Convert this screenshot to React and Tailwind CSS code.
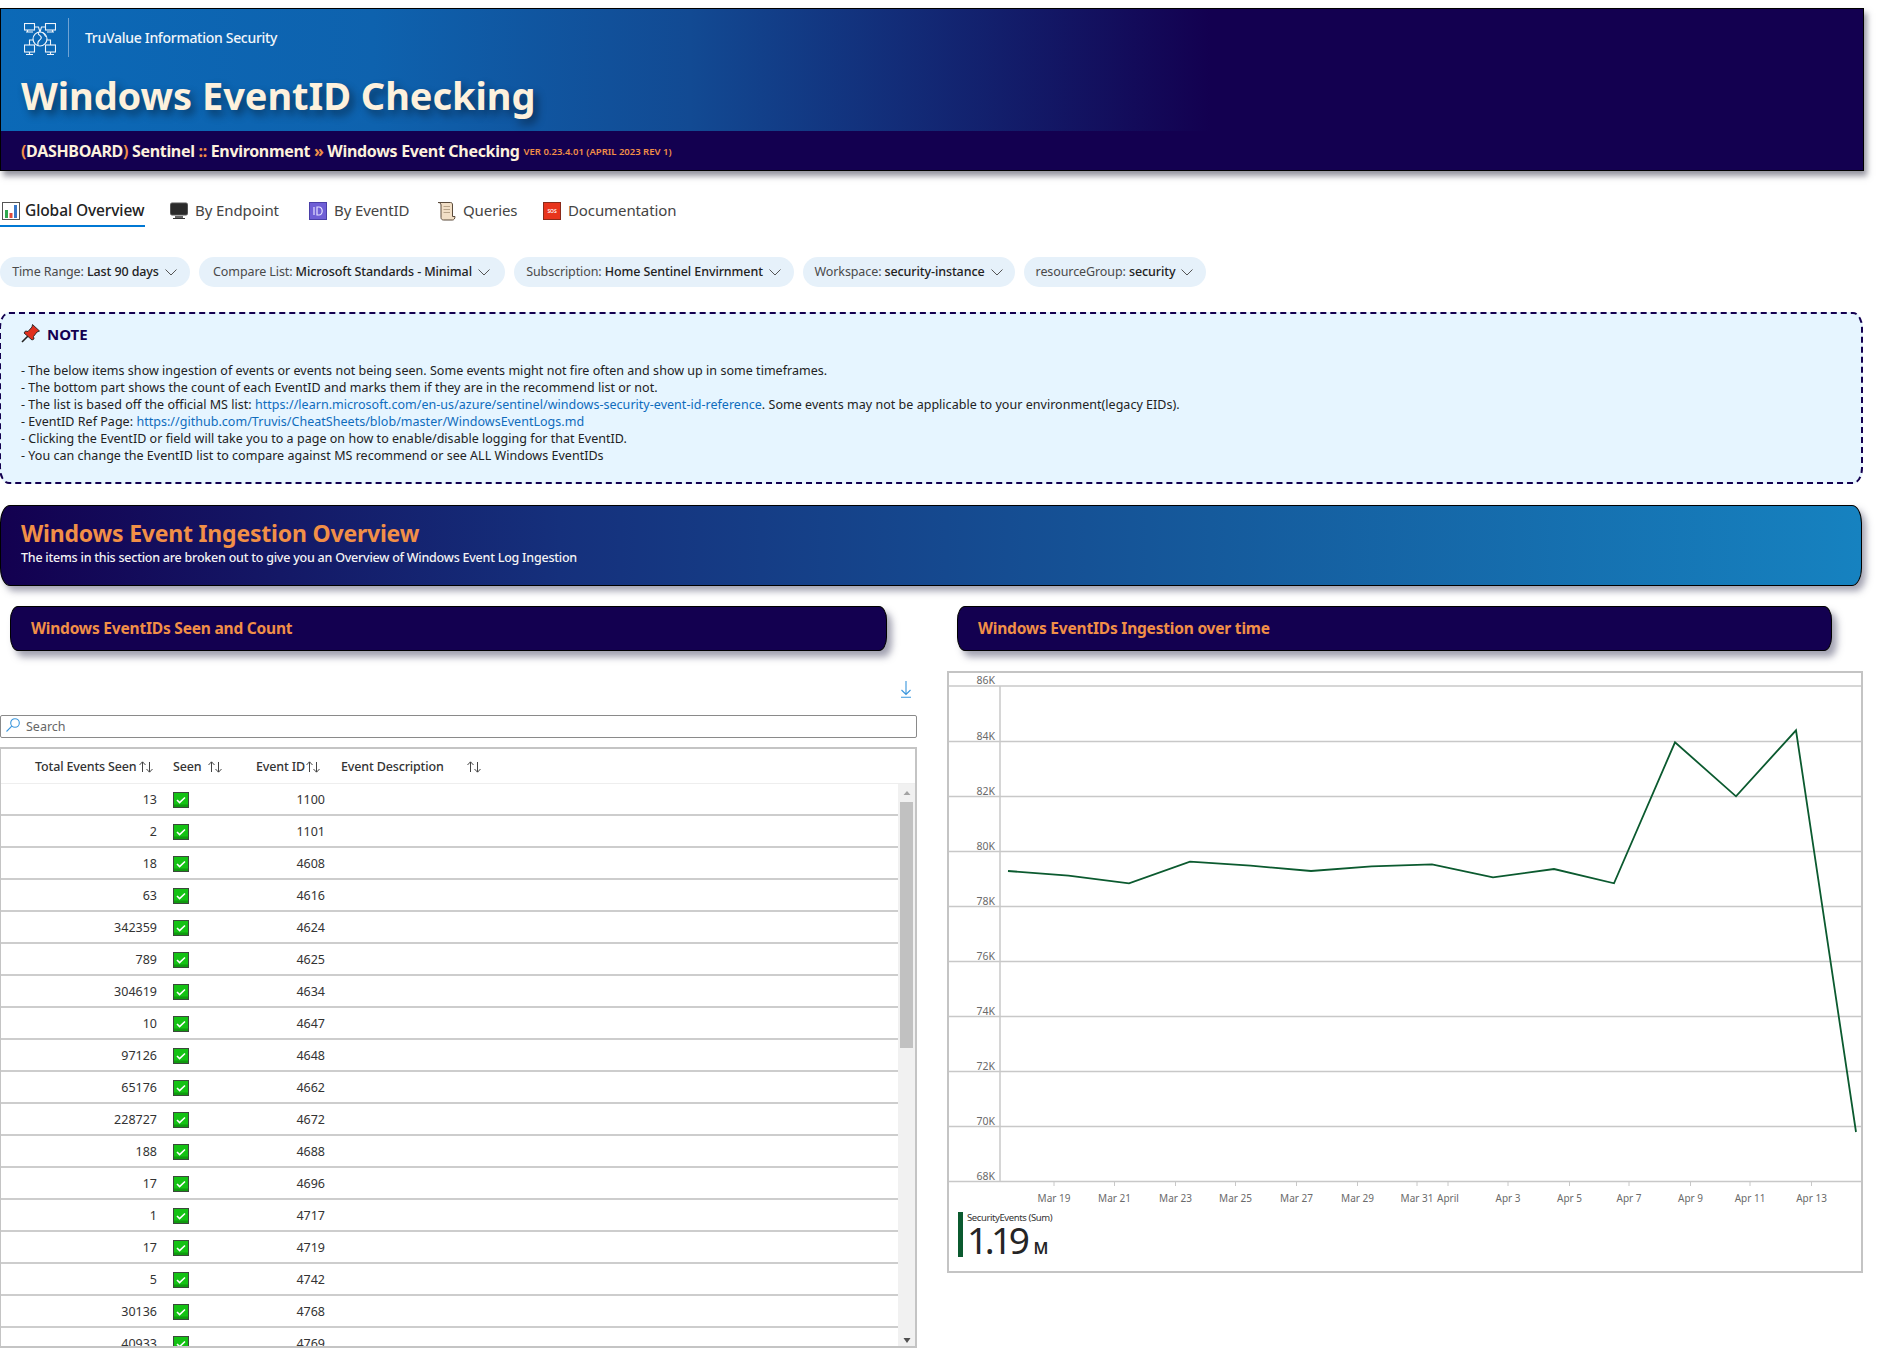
import React from "react";

const rows = [
  [13, 1100], [2, 1101], [18, 4608], [63, 4616], [342359, 4624], [789, 4625],
  [304619, 4634], [10, 4647], [97126, 4648], [65176, 4662], [228727, 4672], [188, 4688],
  [17, 4696], [1, 4717], [17, 4719], [5, 4742], [30136, 4768], [40933, 4769],
];

const Sort = () => (
  <svg width="16" height="14" viewBox="0 0 16 14" className="shrink-0" fill="none" stroke="#444" strokeWidth="1">
    <path d="M4.5 12V2M1.5 5l3-3.2 3 3.2" />
    <path d="M11.5 2v10M8.5 9l3 3.2 3-3.2" />
  </svg>
);

const Chevron = () => (
  <svg width="14" height="9" viewBox="0 0 14 9" className="shrink-0" fill="none" stroke="#555" strokeWidth="1">
    <path d="M1.5 1.5L7 7l5.5-5.5" />
  </svg>
);

const Check = () => (
  <svg width="16" height="16" viewBox="0 0 16 16" className="block">
    <rect x="0.5" y="0.5" width="15" height="15" fill="#14c214" stroke="#3a4a3a" />
    <rect x="1" y="12.5" width="14" height="2.5" fill="#0f9a0f" />
    <path d="M4 8l2.6 2.6L12 5.5" fill="none" stroke="#fff" strokeWidth="1.6" />
  </svg>
);

const Logo = () => (
  <svg width="32" height="33" viewBox="0 0 32 33" fill="none" stroke="#f0f5fb" strokeWidth="1.1" className="block">
    <rect x="0.5" y="0.5" width="10" height="6.500" />
    <path d="M2 9h7M3.500 7v2" />
    <rect x="21.500" y="0.5" width="10" height="6.500" />
    <path d="M23 9h7M28.500 7v2" />
    <rect x="0.5" y="22" width="10" height="7" />
    <path d="M2 31.500h7M5.500 29v2.500" />
    <rect x="21.500" y="22" width="10" height="7" />
    <path d="M23 31.500h7M26.500 29v2.500" />
    <circle cx="16" cy="16" r="7" />
    <path d="M15 9c-3 3 4 3.500 2 6.500s-4 2-3 7M18.500 9.500c2.500 1 1.500 3 3.500 4" />
    <path d="M10.500 4h4l1.500 5M21.500 4h-4l-1.500 5M5.500 22v-5h4M26.500 22v-5h-4" />
  </svg>
);

const BarIcon = () => (
  <svg width="18" height="18" viewBox="0 0 18 18" className="shrink-0">
    <rect x="0.5" y="0.5" width="17" height="17" fill="#fff" stroke="#555" />
    <rect x="3" y="8" width="3" height="8" fill="#2fa84f" />
    <rect x="7.5" y="11" width="3" height="5" fill="#e04a3a" />
    <rect x="12" y="3" width="3" height="13" fill="#3a78c8" />
  </svg>
);
const MonitorIcon = () => (
  <svg width="18" height="18" viewBox="0 0 18 18" className="shrink-0">
    <rect x="0.5" y="1" width="17" height="12" rx="1.5" fill="#2b2b2b" stroke="#555" />
    <path d="M5 14h8v2.5H5z" fill="#666" />
    <path d="M3 16.5h12" stroke="#333" strokeWidth="1" />
  </svg>
);
const IdIcon = () => (
  <svg width="18" height="18" viewBox="0 0 18 18" className="shrink-0">
    <rect x="0.5" y="0.5" width="17" height="17" fill="#6f5fd6" stroke="#4a3fa8" />
    <path d="M5 5v8M8 5v8h2a3.2 4 0 0 0 0-8H8z" fill="none" stroke="#e4e0ff" strokeWidth="1.2" />
  </svg>
);
const ScrollIcon = () => (
  <svg width="19" height="20" viewBox="0 0 19 20" className="shrink-0">
    <path d="M1 1.500h12.500c1.500 0 2 1 2 2.500v11.500h2.500c0 2-1 3.500-2.500 3.500H6.500c-1.500 0-2.500-1-2.500-2.500V4c0-1.500-1-2.500-3-2.500z" fill="#f2dfc6" stroke="#5a4a3a" strokeWidth="1" />
    <path d="M6.500 5.500h6.500M6.500 8.500h6.500M6.500 11.500h6.500" stroke="#b8a388" strokeWidth="1" />
  </svg>
);
const SosIcon = () => (
  <svg width="18" height="18" viewBox="0 0 18 18" className="shrink-0">
    <rect x="0.5" y="0.5" width="17" height="17" fill="#e8341c" stroke="#8a2a1a" />
    <text x="9" y="11" textAnchor="middle" fontSize="5" fill="#fff" fontFamily="Noto Sans" fontWeight="600">SOS</text>
  </svg>
);
const PinIcon = () => (
  <svg width="20" height="20" viewBox="0 0 20 20" className="shrink-0">
    <path d="M1 19l6-6" stroke="#222" strokeWidth="1.6" />
    <path d="M11.500 1.500l7 6.500-2.500 1-3.500 4.500.5 2.500-2 1-8-7 1.500-2 2.500.5L11 4z" fill="#e0301e" stroke="#222" strokeWidth="0.9" />
  </svg>
);

const Pill = ({ w, label, value }) => (
  <div className={`${w} h-[30px] rounded-[15px] bg-[#e6f1fa] flex items-center justify-center gap-[5px] text-[12.5px] tracking-[-0.1px] text-[#4a4a4a]`}>
    <span>{label}: <span className="text-[#222] font-medium">{value}</span></span>
    <Chevron />
  </div>
);

const Tab = ({ icon, label, active, w }) => (
  <div className={`${w} h-[34px] flex items-center tracking-[-0.1px] pt-[3px] border-b-2 ${active ? "gap-[5px] text-[15.5px] border-[#0078d4] text-[#222] font-medium" : "gap-[7px] text-[15px] border-transparent text-[#444]"}`}>
    {icon}
    <span>{label}</span>
  </div>
);

const SubHeader = ({ w, children }) => (
  <div className={`${w} ml-[10px] h-[45px] rounded-[8px/14px] border border-black bg-[#130050] flex items-center pl-[20px] text-[15.5px] font-bold tracking-[-0.2px] text-[#f18f47] shadow-[5px_6px_7px_rgba(70,70,100,0.5)]`}>
    {children}
  </div>
);

const pts = [
  [1008, 871], [1068.5, 875.7], [1129, 883.3], [1190, 861.7], [1250.5, 865.7], [1311, 871],
  [1371.5, 866.3], [1432, 864.3], [1493, 877.3], [1554, 869], [1614, 883.3], [1675, 742.3],
  [1736, 796.3], [1796, 730.3], [1856, 1132],
];
const yLabels = [["86K", 686], ["84K", 741.5], ["82K", 796.5], ["80K", 851.5], ["78K", 906.5], ["76K", 961.5], ["74K", 1016.5], ["72K", 1071.5], ["70K", 1126.5], ["68K", 1181.5]];
const xLabels = [["Mar 19", 1054], ["Mar 21", 1114.5], ["Mar 23", 1175.5], ["Mar 25", 1235.5], ["Mar 27", 1296.5], ["Mar 29", 1357.5], ["Mar 31", 1417], ["April", 1448], ["Apr 3", 1508], ["Apr 5", 1569.5], ["Apr 7", 1629], ["Apr 9", 1690.5], ["Apr 11", 1750], ["Apr 13", 1811.5]];

const Chart = () => (
  <svg width="912" height="539" viewBox="949 673 912 539" className="block" fontFamily="Noto Sans">
    {yLabels.map(([t, y]) => (
      <g key={t}>
        <line x1="949" x2="1861" y1={y} y2={y} stroke="#c8c8c8" strokeWidth="1.5" />
        <text x="995" y={y - 2} textAnchor="end" fontSize="10.500" fill="#6a6a6a">{t}</text>
      </g>
    ))}
    <line x1="1000" x2="1000" y1="686" y2="1181" stroke="#c8c8c8" strokeWidth="1.5" />
    {xLabels.map(([t, x]) => (
      <g key={t}>
        <line x1={x} x2={x} y1="1181" y2="1186" stroke="#c8c8c8" strokeWidth="1" />
        <text x={x} y="1202" textAnchor="middle" fontSize="10" fill="#6a6a6a">{t}</text>
      </g>
    ))}
    <polyline points={pts.map((p) => p.join(",")).join(" ")} fill="none" stroke="#0b5a2f" strokeWidth="1.8" />
  </svg>
);

export default function App() {
  return (
    <div className="w-[1883px] h-[1370px] overflow-hidden bg-white pt-[8px] font-['Noto_Sans','Open_Sans',sans-serif] text-[#222]">
      <header className="w-[1864px] h-[163px] border border-black shadow-[3px_5px_6px_rgba(60,60,80,0.55)]">
        <div className="h-[122px] bg-[linear-gradient(90deg,#0b69b7_0%,#0e62ae_20%,#124a93_37%,#130050_65%,#130050_100%)] pl-[20px] pt-[9px]">
          <div className="h-[39px] flex items-center">
            <div className="w-[48px] h-[39px] border-r border-[#6fa3d4] pl-[3px] pt-[5px]"><Logo /></div>
            <span className="ml-[16px] text-[14px] font-medium tracking-[-0.3px] text-[#f2f6fa]">TruValue Information Security</span>
          </div>
          <h1 className="mt-[15px] text-[38px] leading-[46px] font-bold tracking-[-0.05px] text-[#fdf1dd] [text-shadow:4px_5px_9px_rgba(0,0,0,0.45)]">Windows EventID Checking</h1>
        </div>
        <div className="h-[39px] bg-[#130050] pl-[20px] flex items-center gap-[4px] text-[16px] font-bold tracking-[-0.32px] text-[#fdf1dd]">
          <span>
            <span className="text-[#f18f47]">(</span>DASHBOARD<span className="text-[#f18f47]">)</span> Sentinel <span className="text-[#f18f47]">::</span> Environment <span className="text-[#f18f47]">»</span> Windows Event Checking
          </span>
          <span className="text-[9.5px] mt-[3px] font-semibold tracking-[0px] text-[#f18f47]">VER 0.23.4.01 (APRIL 2023 REV 1)</span>
        </div>
      </header>

      <nav className="mt-[22px] flex">
        <Tab active w="w-[145px] pl-[2px]" icon={<BarIcon />} label="Global Overview" />
        <div className="w-[25px]" />
        <Tab w="w-[139px]" icon={<MonitorIcon />} label="By Endpoint" />
        <Tab w="w-[128px]" icon={<IdIcon />} label="By EventID" />
        <Tab w="w-[106px]" icon={<ScrollIcon />} label="Queries" />
        <Tab w="w-[140px]" icon={<SosIcon />} label="Documentation" />
      </nav>

      <div className="mt-[30px] flex gap-[9px]">
        <Pill w="w-[190px]" label="Time Range" value="Last 90 days" />
        <Pill w="w-[306px]" label="Compare List" value="Microsoft Standards - Minimal" />
        <Pill w="w-[280px]" label="Subscription" value="Home Sentinel Envirnment" />
        <Pill w="w-[212px]" label="Workspace" value="security-instance" />
        <Pill w="w-[182px]" label="resourceGroup" value="security" />
      </div>

      <section className="mt-[25px] -ml-[1px] w-[1864px] h-[172px] rounded-[10px/16px] border-2 border-dashed border-[#130050] bg-[#e6f5ff] pl-[20px] text-[12.5px] leading-[17px] text-[#222]">
        <div className="pt-[9px] h-[48px] flex items-start gap-[6px]">
          <PinIcon />
          <span className="text-[15px] leading-[22px] font-bold text-[#130050]">NOTE</span>
        </div>
        <div className="tracking-[0.03px]">
          <p>- The below items show ingestion of events or events not being seen. Some events might not fire often and show up in some timeframes.</p>
          <p>- The bottom part shows the count of each EventID and marks them if they are in the recommend list or not.</p>
          <p>- The list is based off the official MS list: <span className="text-[#0f6cbd]">https://learn.microsoft.com/en-us/azure/sentinel/windows-security-event-id-reference</span>. Some events may not be applicable to your environment(legacy EIDs).</p>
          <p>- EventID Ref Page: <span className="text-[#0f6cbd]">https://github.com/Truvis/CheatSheets/blob/master/WindowsEventLogs.md</span></p>
          <p>- Clicking the EventID or field will take you to a page on how to enable/disable logging for that EventID.</p>
          <p>- You can change the EventID list to compare against MS recommend or see ALL Windows EventIDs</p>
        </div>
      </section>

      <section className="mt-[21px] w-[1862px] h-[81px] rounded-[10px/18px] border border-black bg-[linear-gradient(90deg,#130050_0%,#15307c_30%,#155a9c_65%,#1682c0_100%)] pl-[20px] pt-[11px] shadow-[4px_5px_7px_rgba(70,70,100,0.5)]">
        <h2 className="text-[23px] leading-[32px] font-bold tracking-[-0.2px] text-[#f18f47]">Windows Event Ingestion Overview</h2>
        <p className="mt-[1px] text-[12.5px] leading-[16px] font-medium tracking-[-0.23px] text-[#f4f4f4]">The items in this section are broken out to give you an Overview of Windows Event Log Ingestion</p>
      </section>

      <div className="mt-[20px] flex">
        <div className="w-[917px]">
          <SubHeader w="w-[877px]">Windows EventIDs Seen and Count</SubHeader>
          <div className="h-[64px] flex justify-end items-start pr-[5px] pt-[30px]">
            <svg width="12" height="17" viewBox="0 0 12 17" fill="none" stroke="#3a96dd" strokeWidth="1.100">
              <path d="M6 0v13M1.500 9l4.500 4.500L10.500 9M1 16.300h10" />
            </svg>
          </div>
          <div className="h-[23px] border border-[#8a8a8a] rounded-[2px] flex items-center pl-[5px] gap-[6px] text-[12.5px] text-[#666]">
            <svg width="14" height="14" viewBox="0 0 14 14" fill="none" stroke="#3a96dd" strokeWidth="1.100" className="-mt-[3px]">
              <circle cx="9" cy="5" r="4.300" />
              <path d="M5.800 8.200L0.500 13.500" />
            </svg>
            <span className="pt-[2px]">Search</span>
          </div>
          <div className="mt-[9px] h-[601px] border-2 border-[#c4c4c4] border-l-[1px] overflow-hidden">
            <div className="h-[34px] flex items-center pt-[2px] text-[12.5px] font-medium tracking-[-0.15px] text-[#333]">
              <div className="w-[164px] pl-[34px] flex items-center"><span className="w-[103px] whitespace-nowrap">Total Events Seen</span><Sort /></div>
              <div className="w-[75px] pl-[8px] flex items-center"><span className="w-[34px]">Seen</span><Sort /></div>
              <div className="w-[101px] pl-[16px] flex items-center"><span className="w-[49px] whitespace-nowrap">Event ID</span><Sort /></div>
              <div className="flex items-center"><span className="w-[125px] whitespace-nowrap">Event Description</span><Sort /></div>
            </div>
            <div className="flex border-t border-[#eeeeee] h-[565px]">
              <div className="flex-1 overflow-hidden">
                {rows.map(([c, id]) => (
                  <div key={id} className="h-[32px] flex items-center border-b-2 border-[#cdcdcd] text-[12.5px] text-[#333]">
                    <div className="w-[156px] text-right pt-[3px]">{c}</div>
                    <div className="w-[16px] ml-[16px] pt-[2px]"><Check /></div>
                    <div className="w-[136px] text-right pt-[3px]">{id}</div>
                  </div>
                ))}
              </div>
              <div className="w-[17px] h-full bg-[#f1f1f1] flex flex-col items-center shrink-0">
                <svg width="10" height="18" viewBox="0 0 10 18" className="shrink-0"><path d="M1.500 11h7L5 7z" fill="#a3a3a3" /></svg>
                <div className="w-[13px] h-[246px] bg-[#c1c1c1]" />
                <div className="flex-1" />
                <svg width="10" height="14" viewBox="0 0 10 14" className="shrink-0"><path d="M1.500 4h7L5 9z" fill="#505050" /></svg>
              </div>
            </div>
          </div>
        </div>

        <div className="ml-[30px] w-[916px]">
          <SubHeader w="w-[875px]">Windows EventIDs Ingestion over time</SubHeader>
          <div className="mt-[20px] h-[602px] border-2 border-[#c4c4c4]">
            <Chart />
            <div className="ml-[9px] flex h-[45px] overflow-hidden">
              <div className="w-[5px] h-[45px] bg-[#0b5a2f]" />
              <div className="ml-[4px]">
                <div className="text-[9.5px] leading-[12px] tracking-[-0.4px] text-[#333]">SecurityEvents (Sum)</div>
                <div className="flex items-baseline gap-[7px] -mt-[2px]">
                  <span className="text-[37px] leading-[36px] tracking-[-3.5px] text-[#252525]">1.19</span>
                  <span className="text-[16px] font-semibold text-[#252525]">M</span>
                </div>
              </div>
            </div>
          </div>
        </div>
      </div>
    </div>
  );
}
